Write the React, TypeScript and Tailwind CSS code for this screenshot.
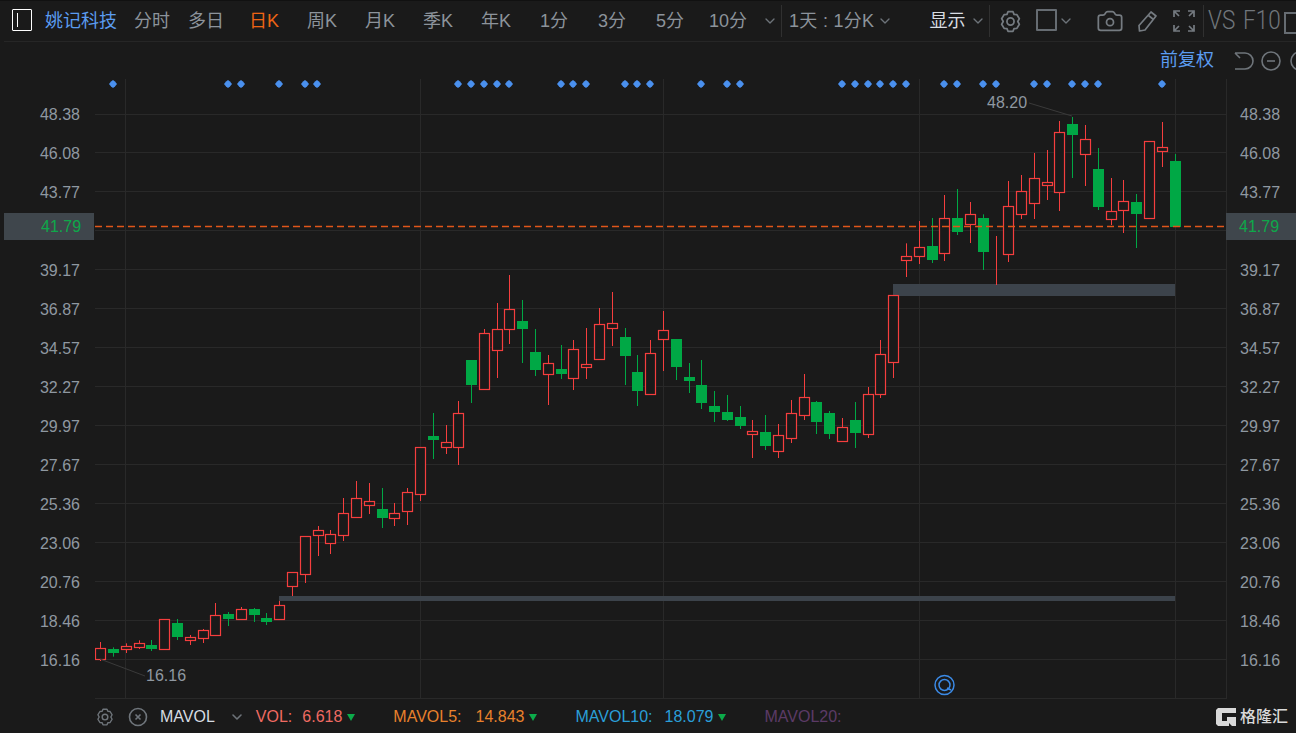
import { ChevronDown, Camera } from "lucide-react"

type Candle = [number, number, number, number] // wick top, body top, body bottom, wick bottom

// read off the chart in three stretches, each as zoomed values (y = base + v / 3)
const UP = "r"
const DOWN = "g"

const first: [string, ...Candle][] = [
  [UP, 726, 745, 776, 783], [DOWN, 742, 747, 759, 770], [UP, 730, 737, 748, 759], [UP, 721, 730, 742, 747],
  [DOWN, 720, 735, 747, 753], [UP, 658, 658, 746, 749], [DOWN, 657, 669, 711, 720], [UP, 705, 710, 721, 735],
  [UP, 687, 691, 715, 729], [UP, 609, 646, 704, 708], [DOWN, 636, 642, 657, 678], [UP, 621, 628, 656, 656],
  [DOWN, 624, 627, 645, 666], [DOWN, 639, 654, 666, 675], [UP, 603, 616, 656, 660], [UP, 517, 517, 559, 588],
  [UP, 409, 409, 523, 549], [UP, 378, 391, 406, 468], [UP, 390, 403, 428, 462], [UP, 294, 340, 406, 423],
  [UP, 243, 295, 352, 352], [UP, 249, 304, 316, 342], [DOWN, 264, 327, 354, 384], [UP, 309, 340, 353, 378],
  [UP, 264, 277, 334, 375], [UP, 142, 142, 283, 303], [DOWN, 39, 108, 120, 177], [UP, 75, 127, 140, 162],
]

const second: [string, ...Candle][] = [
  [UP, 423, 460, 562, 615], [DOWN, 300, 300, 375, 429], [UP, 207, 220, 388, 388], [UP, 129, 208, 271, 354],
  [UP, 45, 148, 208, 252], [DOWN, 120, 183, 207, 309], [DOWN, 207, 276, 330, 348], [UP, 285, 310, 343, 435],
  [DOWN, 255, 327, 342, 357], [UP, 240, 268, 355, 390], [UP, 204, 313, 322, 357], [UP, 144, 193, 298, 298],
  [UP, 96, 190, 205, 258], [DOWN, 204, 231, 288, 375], [DOWN, 285, 336, 393, 438], [UP, 240, 280, 403, 403],
  [UP, 153, 211, 238, 333], [DOWN, 237, 237, 321, 360], [DOWN, 309, 351, 363, 399], [DOWN, 300, 375, 429, 447],
  [DOWN, 393, 438, 456, 486], [DOWN, 405, 456, 480, 483], [DOWN, 438, 471, 498, 507], [UP, 480, 514, 523, 594],
  [DOWN, 465, 516, 558, 570], [UP, 492, 526, 574, 594], [UP, 420, 460, 535, 549], [UP, 342, 412, 466, 480],
  [DOWN, 423, 426, 486, 522], [DOWN, 453, 459, 522, 537], [UP, 474, 502, 544, 544], [DOWN, 426, 480, 519, 564],
  [UP, 381, 403, 523, 534], [UP, 240, 283, 403, 414], [UP, 105, 105, 307, 354],
]

const third: [string, ...Candle][] = [
  [UP, 430, 469, 481, 531], [UP, 363, 442, 469, 492], [DOWN, 354, 438, 480, 489], [UP, 285, 355, 460, 483],
  [DOWN, 267, 354, 396, 405], [UP, 306, 343, 373, 429], [DOWN, 343, 354, 456, 510], [UP, 408, 427, 427, 555],
  [UP, 243, 319, 463, 486], [UP, 225, 274, 343, 357], [UP, 159, 235, 310, 357], [UP, 150, 247, 256, 300],
  [UP, 63, 97, 277, 333], [DOWN, 51, 72, 105, 234], [UP, 75, 118, 163, 258], [DOWN, 144, 207, 321, 330],
  [UP, 234, 334, 358, 375], [UP, 240, 304, 331, 399], [DOWN, 282, 306, 342, 444], [UP, 124, 124, 353, 357],
  [UP, 66, 142, 154, 201], [DOWN, 162, 183, 380, 380],
]

const rebase = (rows: [string, ...Candle][], base: number) =>
  rows.map(([c, a, b, d, e]) => ({ c, high: base + a / 3, top: base + b / 3, bottom: base + d / 3, low: base + e / 3 }))

const candles = [...rebase(first, 400), ...rebase(second, 260), ...rebase(third, 100)]

const DOTS = [
  113, 228, 241, 279, 305, 317, 458, 471, 484, 497, 509, 561, 573, 586, 625, 637, 650, 701, 727, 740, 842, 855, 868,
  880, 893, 906, 944, 957, 983, 996, 1034, 1047, 1072, 1085, 1098, 1162,
]
const GRID_Y = [115, 153, 192, 231, 270, 309, 348, 387, 426, 465, 504, 543, 582, 621, 660]
const GRID_X = [125, 420, 663, 919, 1175]
const PRICES = ["48.38", "46.08", "43.77", "", "39.17", "36.87", "34.57", "32.27", "29.97", "27.67", "25.36", "23.06", "20.76", "18.46", "16.16"]

const NAV_A = ["分时", "多日"]
const NAV_B = ["周K", "月K", "季K", "年K", "1分", "3分", "5分", "10分"]

const FONT = "[font-family:'Liberation_Sans','Noto_Sans_CJK_SC',sans-serif]"

function Gear({ className }: { className: string }) {
  return (
    <svg viewBox="0 0 24 24" fill="none" stroke="currentColor" strokeWidth="1.7" strokeLinejoin="round" className={className}>
      <path d="M9.600 2.600h4.800l1 2.500 2.700.3 2.400 3.900-1.500 2.700 1.500 2.700-2.400 3.900-2.700.3-1 2.500H9.600l-1-2.500-2.700-.3-2.400-3.900 1.500-2.700-1.500-2.700 2.400-3.900 2.700-.3z" />
      <circle cx="12" cy="12" r="3.400" />
    </svg>
  )
}

function Axis({ align }: { align: string }) {
  return (
    <div className={`flex flex-col pt-[16px] ${align}`}>
      {PRICES.map((p, i) => (
        <div key={i} className="h-[39px] leading-[39px] text-[16px] text-[#8f98a1]">
          {p}
        </div>
      ))}
    </div>
  )
}

function CurrentPrice({ className }: { className: string }) {
  return (
    <div className={`absolute top-[134px] h-[27px] bg-[#3f464c] text-[16px] leading-[27px] text-[#0ea84a] ${className}`}>
      41.79
    </div>
  )
}

function Chart() {
  return (
    <svg viewBox="95 79 1132 620" className="w-[1132px] h-[620px] shrink-0">
      <rect x="94.500" y="78.500" width="1132" height="620" fill="none" stroke="#292929" />
      {GRID_Y.map((y) => (
        <line key={y} x1="95" x2="1226" y1={y - 0.5} y2={y - 0.5} stroke="#292929" />
      ))}
      {GRID_X.map((x) => (
        <line key={x} x1={x + 0.5} x2={x + 0.5} y1="79" y2="698" stroke="#292929" />
      ))}
      {DOTS.map((x) => (
        <path key={x} d={`M${x} 80l2 1.500 2 2.500-2 2.500-2 1.500-2-1.500-2-2.500 2-2.500z`} fill="#4a90ee" />
      ))}
      <rect x="893" y="284" width="282" height="12" fill="#3c434b" />
      <rect x="279" y="596" width="896" height="5" fill="#3c434b" />
      {candles.map((k, i) => {
        const x = Math.round(100.2 + 12.79 * i) + 0.5
        const up = k.c === UP
        const color = up ? "#f53e3e" : "#00a845"
        const top = Math.round(k.top)
        const bottom = Math.round(k.bottom)
        return (
          <g key={i}>
            <line x1={x} x2={x} y1={k.high} y2={k.low} stroke={color} />
            {up ? (
              <rect x={x - 5} y={top + 0.5} width="10" height={bottom - top} fill={bottom - top > 0 ? "#1a1a1a" : color} stroke={color} strokeWidth="1.200" />
            ) : (
              <rect x={x - 5.5} y={top} width="11" height={bottom - top} fill={color} />
            )}
          </g>
        )
      })}
      <line x1="95" x2="1226" y1="226.500" y2="226.500" stroke="#e0561a" strokeWidth="1.300" strokeDasharray="7 4" />
      <line x1="1029" y1="103" x2="1072" y2="116" stroke="#3a3a3a" />
      <line x1="100" y1="659" x2="145" y2="676" stroke="#3a3a3a" />
      <text x="987" y="108" fill="#8f98a1" fontSize="16">48.20</text>
      <text x="146" y="681" fill="#8f98a1" fontSize="16">16.16</text>
      <circle cx="944.500" cy="685" r="9.500" fill="none" stroke="#3b8ae6" strokeWidth="1.500" />
      <circle cx="944.500" cy="685" r="5.500" fill="none" stroke="#3b8ae6" strokeWidth="1.500" />
      <line x1="947" y1="688" x2="951" y2="690" stroke="#3b8ae6" strokeWidth="1.500" />
    </svg>
  )
}

function TopBar() {
  return (
    <div className="h-[41px] shrink-0 flex items-center border-b border-[#262626] text-[18px] text-[#8c939b] whitespace-nowrap overflow-hidden">
      <div className="ml-[8px] w-[20px] h-[22px] mb-[3px] shrink-0 border border-white rounded-[1px] flex items-center pl-[4px]">
        <div className="w-px h-[14px] bg-white" />
      </div>
      <div className="ml-[13px] w-[80px] shrink-0 text-[#5b9cf0]">姚记科技</div>
      {NAV_A.map((t) => (
        <div key={t} className="w-[54px] shrink-0 text-center">{t}</div>
      ))}
      <div className="ml-[2px] w-[58px] shrink-0 text-center text-[#ee6414]">日K</div>
      {NAV_B.map((t) => (
        <div key={t} className="w-[58px] shrink-0 text-center">{t}</div>
      ))}
      <ChevronDown className="ml-[5px] w-[16px] h-[16px] text-[#6d7379] shrink-0" strokeWidth={2} />
      <div className="ml-[3px] w-px h-[32px] bg-[#303030] shrink-0" />
      <div className="ml-[7px] shrink-0 tracking-[0.3px]">1天 : 1分K</div>
      <ChevronDown className="ml-[3px] w-[16px] h-[16px] text-[#6d7379] shrink-0" strokeWidth={2} />
      <div className="ml-[36px] shrink-0 text-[#d8dde2]">显示</div>
      <ChevronDown className="ml-[5px] w-[16px] h-[16px] text-[#6d7379] shrink-0" strokeWidth={2} />
      <div className="ml-[3px] w-px h-[32px] bg-[#303030] shrink-0" />
      <Gear className="ml-[8px] w-[25px] h-[25px] text-[#757b81] shrink-0" />
      <div className="ml-[13px] w-[21px] h-[22px] mb-[3px] border-2 border-[#666c72] rounded-[1px] shrink-0" />
      <ChevronDown className="ml-[1px] w-[16px] h-[16px] text-[#6d7379] shrink-0" strokeWidth={2} />
      <Camera className="ml-[22px] w-[28px] h-[28px] text-[#757b81] shrink-0" strokeWidth={1.5} />
      <svg viewBox="0 0 24 24" fill="none" stroke="#757b81" strokeWidth="1.700" strokeLinejoin="round" className="ml-[11px] w-[24px] h-[24px] shrink-0">
        <path d="M16 3l5 4-11 14-5.500 1-.5-5.500z" />
        <path d="M13.500 6.500l5 4" />
      </svg>
      <svg viewBox="0 0 24 24" fill="none" stroke="#757b81" strokeWidth="1.700" className="ml-[13px] w-[24px] h-[24px] shrink-0">
        <path d="M2 8V2h6M16 2h6v6M22 16v6h-6M8 22H2v-6M3 3l4 4M21 3l-4 4M21 21l-4-4M3 21l4-4" />
      </svg>
      <div className="ml-[7px] w-px h-[32px] bg-[#303030] shrink-0" />
      <div className="ml-[4px] w-[30px] shrink-0 text-[25px] font-light [font-family:Roboto,sans-serif] text-[#70767c] [transform:scaleX(0.9)] origin-left">VS</div>
      <div className="ml-[5px] w-[36px] shrink-0 text-[25px] font-light [font-family:Roboto,sans-serif] text-[#70767c] [transform:scaleX(0.9)] origin-left">F10</div>
      <div className="ml-[5px] mt-[3px] w-[20px] h-[22px] shrink-0 border-2 border-[#666c72]" />
    </div>
  )
}

function Legend({ label, value, color, gap, className }: { label: string; value: string; color: string; gap: string; className: string }) {
  return (
    <div className={`flex items-center ${color} ${className}`}>
      <span>{label}</span>
      <span className={gap}>{value}</span>
      <span className="ml-[5px] mt-[1px] w-0 h-0 border-x-[4.500px] border-x-transparent border-t-[7px] border-t-[#0cab4a]" />
    </div>
  )
}

function BottomBar() {
  return (
    <div className="flex-1 flex items-center pt-[2px] text-[16px] whitespace-nowrap">
      <Gear className="ml-[91px] w-[20px] h-[20px] text-[#6f757b]" />
      <svg viewBox="0 0 20 20" fill="none" stroke="#6f757b" strokeWidth="1.600" className="ml-[13px] w-[20px] h-[20px]">
        <circle cx="10" cy="10" r="8.500" />
        <path d="M7.500 7.500l5 5M12.500 7.500l-5 5" />
      </svg>
      <span className="ml-[12px] text-[#d6dce2]">MAVOL</span>
      <ChevronDown className="ml-[14px] w-[16px] h-[16px] text-[#6d7379]" strokeWidth={2.400} />
      <Legend className="ml-[11px]" gap="ml-[10px]" label="VOL:" value="6.618" color="text-[#ef6a62]" />
      <Legend className="ml-[38px]" gap="ml-[14px]" label="MAVOL5:" value="14.843" color="text-[#e8812c]" />
      <Legend className="ml-[38px]" gap="ml-[12px]" label="MAVOL10:" value="18.079" color="text-[#2a9fd8]" />
      <span className="ml-[38px] text-[#5c3a66]">MAVOL20:</span>
      <div className="ml-auto mr-[8px] flex items-center">
        <svg viewBox="0 0 20 18" className="w-[20px] h-[18px]">
          <path d="M2 0h18v5H6v8h5v-4h9v9h-4l-3-3v3H2l-2-2V2z" fill="#d9d9d9" />
        </svg>
        <span className="ml-[4px] text-[16px] font-medium text-[#d9d9d9]">格隆汇</span>
      </div>
    </div>
  )
}

export default function App() {
  return (
    <div className={`w-[1296px] h-[733px] bg-[#111] pt-px overflow-hidden ${FONT}`}>
      <div className="w-[1296px] h-[732px] bg-[#1a1a1a] flex flex-col pl-[4px]">
        <TopBar />
        <div className="h-[37px] flex items-center shrink-0 overflow-hidden whitespace-nowrap">
          <span className="ml-[1156px] shrink-0 text-[18px] text-[#5b9cf0]">前复权</span>
          <svg viewBox="0 0 20 20" fill="none" stroke="#6f757b" strokeWidth="1.600" className="ml-[20px] w-[20px] h-[20px] shrink-0">
            <path d="M1 2h10a8 8 0 0 1 0 16H1M1 2l5 5" />
          </svg>
          <svg viewBox="0 0 20 20" fill="none" stroke="#6f757b" strokeWidth="1.600" className="ml-[7px] w-[20px] h-[20px] shrink-0">
            <circle cx="10" cy="10" r="9" />
            <path d="M6 10h8" />
          </svg>
          <svg viewBox="0 0 20 20" fill="none" stroke="#6f757b" strokeWidth="1.600" className="ml-[9px] w-[20px] h-[20px] shrink-0">
            <circle cx="10" cy="10" r="9" />
          </svg>
        </div>
        <div className="relative flex items-start shrink-0">
          <div className="w-[91px] shrink-0">
            <Axis align="items-end pr-[15px]" />
          </div>
          <Chart />
          <div className="flex-1">
            <Axis align="pl-[13px]" />
          </div>
          <CurrentPrice className="left-0 w-[90px] pl-[37px]" />
          <CurrentPrice className="left-[1222px] w-[70px] pl-[13px]" />
        </div>
        <BottomBar />
      </div>
    </div>
  )
}
